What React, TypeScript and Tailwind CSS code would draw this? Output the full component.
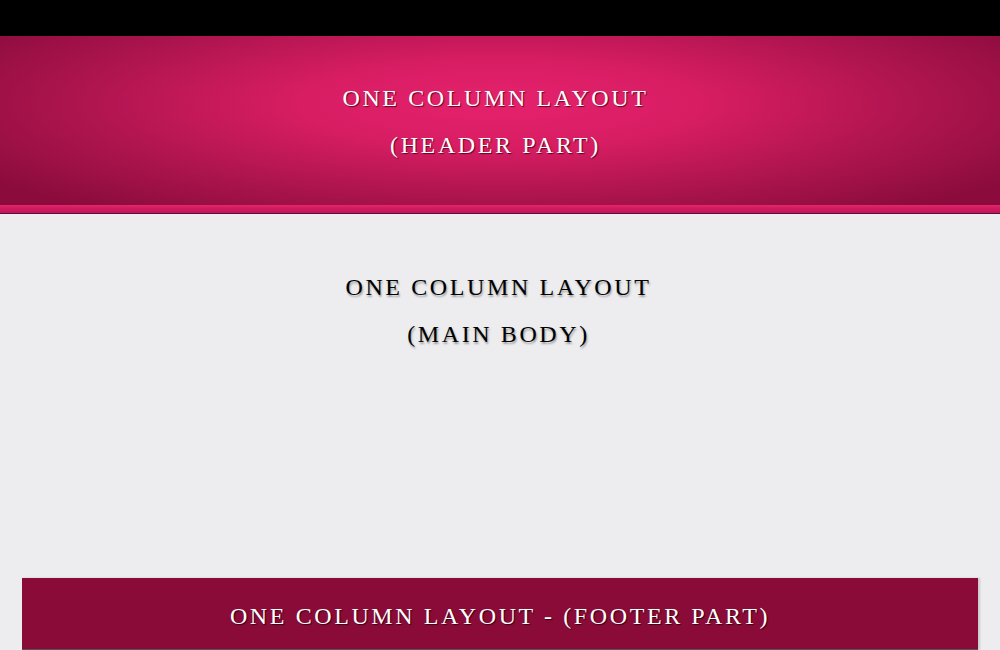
import React from "react";

export default function App() {
  const serif = { fontFamily: '"Liberation Serif", "Times New Roman", serif' };
  return (
    <div className="w-[1000px] h-[650px] overflow-hidden bg-[#ededef] flex flex-col" style={serif}>
      <div className="h-[36px] bg-black shrink-0" />
      <header className="h-[169px] shrink-0 flex flex-col items-center justify-center gap-[19px] pt-[2px] pr-[9px] bg-[radial-gradient(ellipse_62%_80%_at_50%_40%,#e5226c_0%,#d81d63_32%,#b01550_66%,#8b0c3c_100%)]">
        <div className="text-[24px] leading-[28px] tracking-[2.6px] text-white [text-shadow:1px_1px_1px_rgba(60,0,20,0.8)]">ONE COLUMN LAYOUT</div>
        <div className="text-[24px] leading-[28px] tracking-[2.6px] text-white [text-shadow:1px_1px_1px_rgba(60,0,20,0.8)]">(HEADER PART)</div>
      </header>
      <div className="h-[9px] shrink-0 bg-[linear-gradient(#e5266f,#d21b60_40%,#c21856)] border-b border-[#5c0a48]" />
      <main className="flex-1 flex flex-col items-center pt-[59px] pr-[3px] gap-[19px]">
        <div className="text-[24px] leading-[28px] tracking-[2.6px] text-black [text-shadow:1px_2px_2px_rgba(0,0,0,0.35)]">ONE COLUMN LAYOUT</div>
        <div className="text-[24px] leading-[28px] tracking-[2.6px] text-black [text-shadow:1px_2px_2px_rgba(0,0,0,0.35)]">(MAIN BODY)</div>
      </main>
      <footer className="mx-[22px] h-[72px] shrink-0 bg-[#8a0b38] border-b border-[#555] shadow-[2px_0_2px_rgba(0,0,0,0.15)] flex justify-center pt-[24px]">
        <div className="text-[24px] leading-[28px] tracking-[2.6px] text-white [text-shadow:1px_1px_1px_rgba(40,0,10,0.9)]">ONE COLUMN LAYOUT - (FOOTER PART)</div>
      </footer>
    </div>
  );
}
